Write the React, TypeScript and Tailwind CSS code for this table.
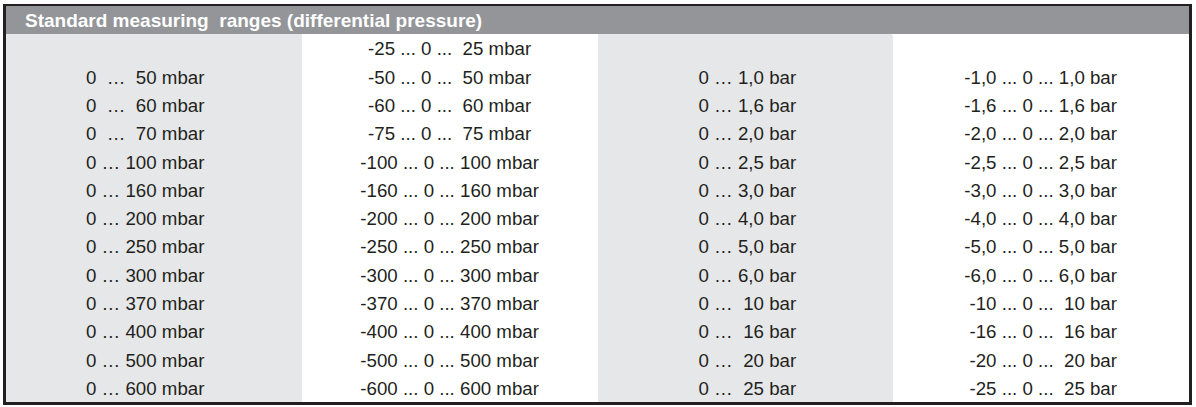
import React from 'react';

const col1 = [
  '',
  '0  …  50 mbar',
  '0  …  60 mbar',
  '0  …  70 mbar',
  '0 … 100 mbar',
  '0 … 160 mbar',
  '0 … 200 mbar',
  '0 … 250 mbar',
  '0 … 300 mbar',
  '0 … 370 mbar',
  '0 … 400 mbar',
  '0 … 500 mbar',
  '0 … 600 mbar',
];

const col2 = [
  '-25 ... 0 ...  25 mbar',
  '-50 ... 0 ...  50 mbar',
  '-60 ... 0 ...  60 mbar',
  '-75 ... 0 ...  75 mbar',
  '-100 ... 0 ... 100 mbar',
  '-160 ... 0 ... 160 mbar',
  '-200 ... 0 ... 200 mbar',
  '-250 ... 0 ... 250 mbar',
  '-300 ... 0 ... 300 mbar',
  '-370 ... 0 ... 370 mbar',
  '-400 ... 0 ... 400 mbar',
  '-500 ... 0 ... 500 mbar',
  '-600 ... 0 ... 600 mbar',
];

const col3 = [
  '',
  '0 … 1,0 bar',
  '0 … 1,6 bar',
  '0 … 2,0 bar',
  '0 … 2,5 bar',
  '0 … 3,0 bar',
  '0 … 4,0 bar',
  '0 … 5,0 bar',
  '0 … 6,0 bar',
  '0 …  10 bar',
  '0 …  16 bar',
  '0 …  20 bar',
  '0 …  25 bar',
];

const col4 = [
  '',
  '-1,0 ... 0 ... 1,0 bar',
  '-1,6 ... 0 ... 1,6 bar',
  '-2,0 ... 0 ... 2,0 bar',
  '-2,5 ... 0 ... 2,5 bar',
  '-3,0 ... 0 ... 3,0 bar',
  '-4,0 ... 0 ... 4,0 bar',
  '-5,0 ... 0 ... 5,0 bar',
  '-6,0 ... 0 ... 6,0 bar',
  '-10 ... 0 ...  10 bar',
  '-16 ... 0 ...  16 bar',
  '-20 ... 0 ...  20 bar',
  '-25 ... 0 ...  25 bar',
];

// one column of the table, 13 rows
function Column({ rows, className }: { rows: string[]; className: string }) {
  return (
    <div className={`grid grid-rows-[repeat(13,minmax(0,1fr))] min-h-0 ${className}`}>
      {rows.map((r, i) => (
        <div key={i} className="flex items-center whitespace-pre leading-none pt-[3px]">
          {r}
        </div>
      ))}
    </div>
  );
}

export default function App() {
  return (
    <div className="bg-white w-[1196px] h-[407px] pt-[4px] pl-[3px] font-['Liberation_Sans',Arial,sans-serif] text-[#231f20]">
      <div className="w-[1189px] h-[401px] flex flex-col border-solid border-[#231f20] border-l-[3px] border-r-[3px] border-t-[2px] border-b-[3px]">
        {/* header bar */}
        <div className="h-[28px] shrink-0 bg-[#939598] pl-[19px] flex items-center text-white font-bold text-[19px] leading-none">
          <span className="whitespace-pre">Standard measuring  ranges (differential pressure)</span>
        </div>
        {/* body columns */}
        <div className="grid grid-cols-4 flex-1 min-h-0 text-[18.7px]">
          <Column rows={col1} className="bg-[#e6e7e8] [&>div]:pl-[80px]" />
          <Column rows={col2} className="bg-white [&>div]:justify-center" />
          <Column rows={col3} className="bg-[#e6e7e8] [&>div]:pl-[101px] rounded-tr-[3px]" />
          <Column rows={col4} className="bg-white [&>div]:justify-end [&>div]:pr-[72px]" />
        </div>
      </div>
    </div>
  );
}
